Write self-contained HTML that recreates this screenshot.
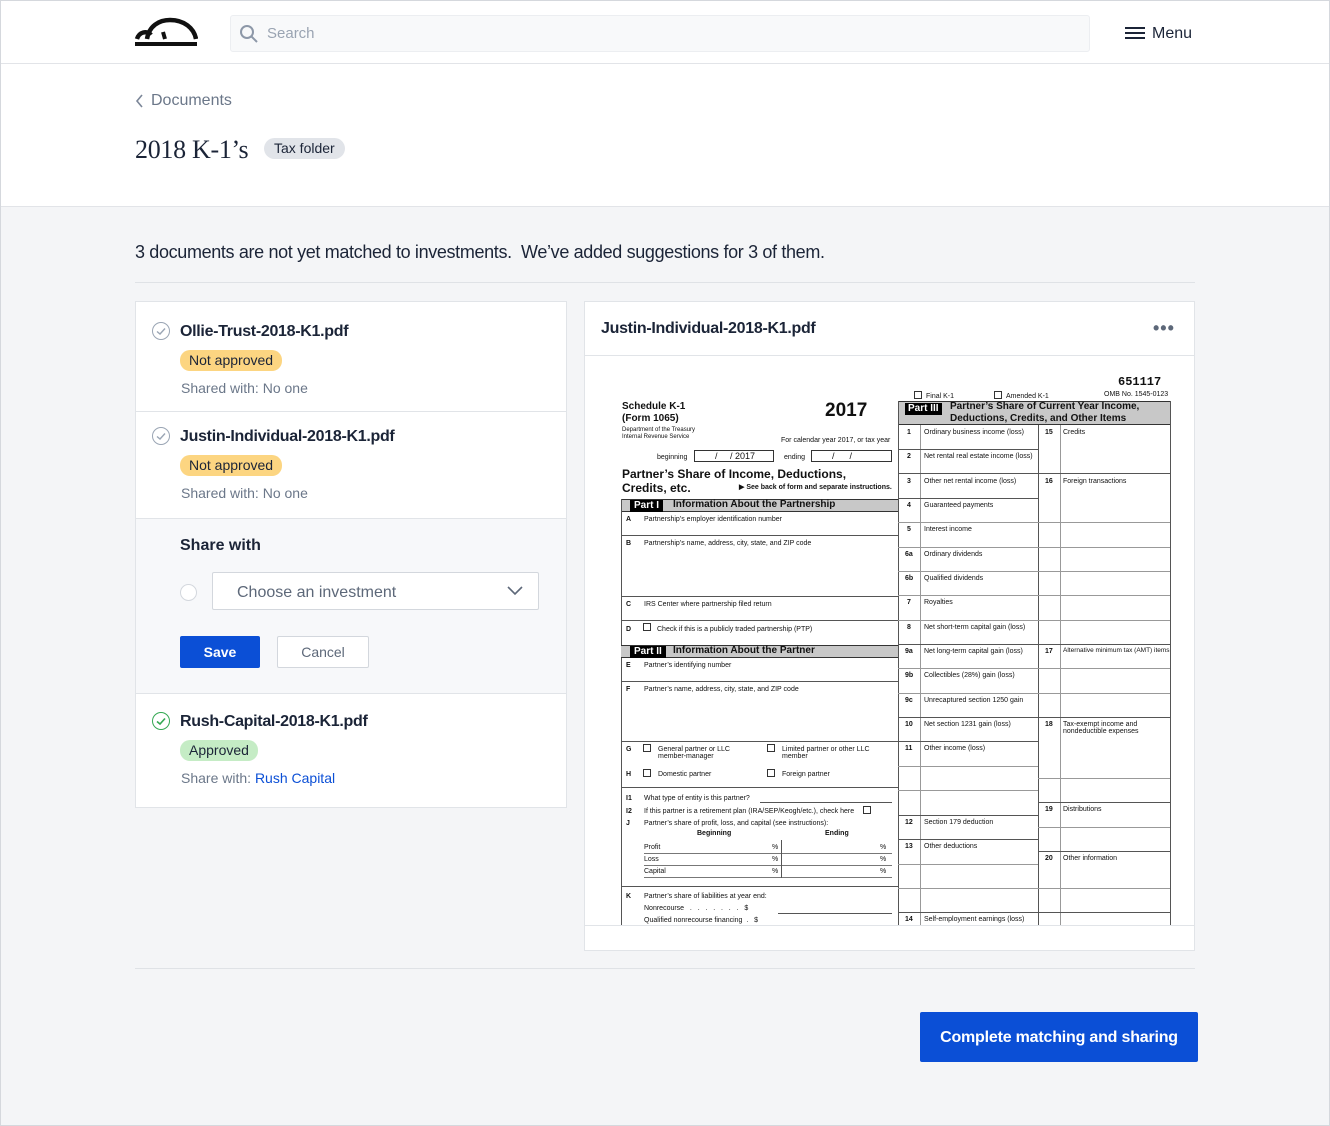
<!DOCTYPE html>
<html><head><meta charset="utf-8"><style>
*{box-sizing:border-box;margin:0;padding:0}
body{width:1330px;height:1126px;position:relative;background:#f4f5f7;font-family:"Liberation Sans",sans-serif;color:#1b2437;overflow:hidden}
.a{position:absolute}
.frame{position:absolute;left:0;top:0;width:1330px;height:1126px;border:1px solid #d5d8dd;pointer-events:none}
.hdr{left:0;top:0;width:1330px;height:64px;background:#fff;border-bottom:1px solid #e2e4e8}
.top{left:0;top:64px;width:1330px;height:143px;background:#fff;border-bottom:1px solid #e2e4e8}
.card{background:#fff;border:1px solid #e1e4e8}
.pill{display:inline-block;border-radius:10px;font-size:14px;padding:0 9px;height:21px;line-height:21px}
.chk{width:18px;height:18px;border:1.5px solid #9aa5b4;border-radius:50%}
.fn{font-size:16px;font-weight:bold;letter-spacing:-0.3px}
.sub{font-size:14px;color:#6b7789}
.f{font-size:7px;color:#111;white-space:nowrap;line-height:1}
.b{font-weight:bold}
.hl{position:absolute;height:1px;background:#555}
.vl{position:absolute;width:1px;background:#555}
</style></head><body>
<div class="a hdr"></div>
<svg class="a" style="left:134px;top:17px" width="64" height="31" viewBox="0 0 64 31"><path d="M3 22 C5 15 13 13 17 18 M13 22 C15 9 25 3 36 3 C50 3 60 11 62 22" fill="none" stroke="#111" stroke-width="4.5"/><path d="M31 22 L29 15" stroke="#111" stroke-width="4"/><rect x="1" y="25" width="62" height="4" fill="#111"/></svg>
<div class="a" style="left:230px;top:15px;width:860px;height:37px;background:#f8f9fa;border:1px solid #eceef1;border-radius:3px"></div>
<svg class="a" style="left:239px;top:24px" width="20" height="20" viewBox="0 0 20 20"><circle cx="8" cy="8" r="6" fill="none" stroke="#8d98a8" stroke-width="2"/><path d="M12.5 12.5 L18 18" stroke="#8d98a8" stroke-width="2"/></svg>
<div class="a" style="left:267px;top:25px;font-size:15px;color:#9aa4b2">Search</div>
<svg class="a" style="left:1125px;top:26px" width="20" height="15"><rect y="1" width="20" height="2" fill="#1b2437"/><rect y="6" width="20" height="2" fill="#1b2437"/><rect y="11" width="20" height="2" fill="#1b2437"/></svg>
<div class="a" style="left:1152px;top:25px;font-size:16px">Menu</div>
<div class="a top"></div>
<svg class="a" style="left:134px;top:93px" width="10" height="16"><path d="M8 2 L3 8 L8 14" fill="none" stroke="#7b8698" stroke-width="1.6"/></svg>
<div class="a" style="left:151px;top:92px;font-size:16px;color:#6b7789">Documents</div>
<div class="a" style="left:135px;top:135px;font-size:26px;font-family:'Liberation Serif',serif;letter-spacing:-0.3px">2018 K-1’s</div>
<div class="a" style="left:264px;top:138px;height:21px;line-height:21px;padding:0 10px;background:#e1e4e9;border-radius:11px;font-size:14px">Tax folder</div>

<div class="a" style="left:135px;top:242px;font-size:18px;letter-spacing:-0.35px">3 documents are not yet matched to investments.&nbsp; We’ve added suggestions for 3 of them.</div>
<div class="a" style="left:135px;top:282px;width:1060px;height:1px;background:#dfe2e6"></div>

<div class="a card" style="left:135px;top:301px;width:432px;height:507px"></div>
<div class="a" style="left:136px;top:411px;width:430px;height:1px;background:#e1e4e8"></div>
<div class="a" style="left:136px;top:518px;width:430px;height:1px;background:#e1e4e8"></div>
<div class="a" style="left:136px;top:519px;width:430px;height:174px;background:#f7f8fa"></div>
<div class="a" style="left:136px;top:693px;width:430px;height:1px;background:#e1e4e8"></div>

<div class="a chk" style="left:152px;top:322px"></div><svg class="a" style="left:156px;top:327px" width="10" height="9"><path d="M1 4.5 L4 7 L9 1.5" fill="none" stroke="#9aa5b4" stroke-width="1.4"/></svg>
<div class="a fn" style="left:180px;top:323px">Ollie-Trust-2018-K1.pdf</div>
<div class="a pill" style="left:180px;top:350px;background:#fcd581">Not approved</div>
<div class="a sub" style="left:181px;top:380px">Shared with: No one</div>

<div class="a chk" style="left:152px;top:427px"></div><svg class="a" style="left:156px;top:432px" width="10" height="9"><path d="M1 4.5 L4 7 L9 1.5" fill="none" stroke="#9aa5b4" stroke-width="1.4"/></svg>
<div class="a fn" style="left:180px;top:428px">Justin-Individual-2018-K1.pdf</div>
<div class="a pill" style="left:180px;top:455px;background:#fcd581">Not approved</div>
<div class="a sub" style="left:181px;top:485px">Shared with: No one</div>

<div class="a" style="left:180px;top:537px;font-size:16px;font-weight:bold">Share with</div>
<div class="a" style="left:180px;top:584px;width:17px;height:17px;border:1px solid #d3d7dd;border-radius:50%;background:#fff"></div>
<div class="a" style="left:212px;top:572px;width:327px;height:38px;background:#fff;border:1px solid #d3d7dd;border-radius:2px"></div>
<div class="a" style="left:237px;top:584px;font-size:16px;color:#5d6879">Choose an investment</div>
<svg class="a" style="left:506px;top:585px" width="18" height="12"><path d="M2 2 L9 9 L16 2" fill="none" stroke="#5d6879" stroke-width="1.6"/></svg>
<div class="a" style="left:180px;top:636px;width:80px;height:32px;background:#0b4fd6;border-radius:2px;color:#fff;font-size:14px;font-weight:bold;text-align:center;line-height:32px">Save</div>
<div class="a" style="left:277px;top:636px;width:92px;height:32px;background:#fff;border:1px solid #d3d7dd;border-radius:2px;color:#5d6879;font-size:14px;text-align:center;line-height:30px">Cancel</div>

<div class="a chk" style="left:152px;top:712px;border-color:#34a853"></div><svg class="a" style="left:156px;top:717px" width="10" height="9"><path d="M1 4.5 L4 7 L9 1.5" fill="none" stroke="#34a853" stroke-width="1.6"/></svg>
<div class="a fn" style="left:180px;top:713px">Rush-Capital-2018-K1.pdf</div>
<div class="a pill" style="left:180px;top:740px;background:#c5ecc5">Approved</div>
<div class="a sub" style="left:181px;top:770px">Share with: <span style="color:#0b4fd6">Rush Capital</span></div>

<div class="a card" style="left:584px;top:301px;width:611px;height:650px"></div>
<div class="a fn" style="left:601px;top:320px">Justin-Individual-2018-K1.pdf</div>
<div class="a" style="left:1153px;top:318px;font-size:18px;font-weight:bold;color:#5d6879;letter-spacing:1px">•••</div>
<div class="a" style="left:585px;top:355px;width:609px;height:1px;background:#e1e4e8"></div>
<div class="a" style="left:585px;top:925px;width:609px;height:1px;background:#e1e4e8"></div>

<!-- form -->
<div class="a f b" style="left:622px;top:402px;font-size:10px">Schedule K-1</div>
<div class="a f b" style="left:622px;top:414px;font-size:10px">(Form 1065)</div>
<div class="a f" style="left:622px;top:427px;font-size:6px">Department of the Treasury</div>
<div class="a f" style="left:622px;top:434px;font-size:6px">Internal Revenue Service</div>
<div class="a f b" style="left:825px;top:401px;font-size:19px">2017</div>
<div class="a f" style="left:781px;top:437px">For calendar year 2017, or tax year</div>
<div class="a f" style="left:657px;top:454px">beginning</div>
<div class="a" style="left:694px;top:450px;width:80px;height:12px;border:1px solid #333"></div>
<div class="a f" style="left:715px;top:452px;font-size:9px">/ &nbsp; &nbsp; / 2017</div>
<div class="a f" style="left:784px;top:454px">ending</div>
<div class="a" style="left:811px;top:450px;width:81px;height:12px;border:1px solid #333"></div>
<div class="a f" style="left:832px;top:452px;font-size:9px">/ &nbsp; &nbsp; &nbsp;/</div>
<div class="a f b" style="left:622px;top:468px;font-size:12px">Partner’s Share of Income, Deductions,</div>
<div class="a f b" style="left:622px;top:482px;font-size:12px">Credits, etc.</div>
<div class="a f b" style="left:739px;top:484px">▶ See back of form and separate instructions.</div>
<div class="a" style="left:621px;top:499px;width:277px;height:13px;background:#c8c8c8;border-top:1px solid #333;border-bottom:1px solid #333"></div>
<div class="a f b" style="left:630px;top:500px;font-size:10px;background:#000;color:#fff;padding:1px 4px">Part I</div>
<div class="a f b" style="left:673px;top:500px;font-size:10px">Information About the Partnership</div>
<div class="vl" style="left:621px;top:499px;height:426px"></div>
<div class="a f b" style="left:626px;top:516px">A</div><div class="a f" style="left:644px;top:516px">Partnership’s employer identification number</div>
<div class="hl" style="left:621px;top:535px;width:277px"></div>
<div class="a f b" style="left:626px;top:540px">B</div><div class="a f" style="left:644px;top:540px">Partnership’s name, address, city, state, and ZIP code</div>
<div class="hl" style="left:621px;top:596px;width:277px"></div>
<div class="a f b" style="left:626px;top:601px">C</div><div class="a f" style="left:644px;top:601px">IRS Center where partnership filed return</div>
<div class="hl" style="left:621px;top:620px;width:277px"></div>
<div class="a f b" style="left:626px;top:626px">D</div><div class="a" style="left:643px;top:623px;width:8px;height:8px;border:1px solid #333"></div><div class="a f" style="left:657px;top:626px">Check if this is a publicly traded partnership (PTP)</div>
<div class="a" style="left:621px;top:645px;width:277px;height:13px;background:#c8c8c8;border-top:1px solid #333;border-bottom:1px solid #333"></div>
<div class="a f b" style="left:630px;top:646px;font-size:10px;background:#000;color:#fff;padding:1px 4px">Part II</div>
<div class="a f b" style="left:673px;top:646px;font-size:10px">Information About the Partner</div>
<div class="a f b" style="left:626px;top:662px">E</div><div class="a f" style="left:644px;top:662px">Partner’s identifying number</div>
<div class="hl" style="left:621px;top:681px;width:277px"></div>
<div class="a f b" style="left:626px;top:686px">F</div><div class="a f" style="left:644px;top:686px">Partner’s name, address, city, state, and ZIP code</div>
<div class="hl" style="left:621px;top:741px;width:277px"></div>
<div class="a f b" style="left:626px;top:746px">G</div><div class="a" style="left:643px;top:744px;width:8px;height:8px;border:1px solid #333"></div><div class="a f" style="left:658px;top:746px">General partner or LLC<br>member-manager</div>
<div class="a" style="left:767px;top:744px;width:8px;height:8px;border:1px solid #333"></div><div class="a f" style="left:782px;top:746px">Limited partner or other LLC<br>member</div>
<div class="a f b" style="left:626px;top:771px">H</div><div class="a" style="left:643px;top:769px;width:8px;height:8px;border:1px solid #333"></div><div class="a f" style="left:658px;top:771px">Domestic partner</div>
<div class="a" style="left:767px;top:769px;width:8px;height:8px;border:1px solid #333"></div><div class="a f" style="left:782px;top:771px">Foreign partner</div>
<div class="hl" style="left:621px;top:787px;width:277px"></div>
<div class="a f b" style="left:626px;top:795px">I1</div><div class="a f" style="left:644px;top:795px">What type of entity is this partner?</div><div class="hl" style="left:760px;top:802px;width:132px"></div>
<div class="a f b" style="left:626px;top:808px">I2</div><div class="a f" style="left:644px;top:808px">If this partner is a retirement plan (IRA/SEP/Keogh/etc.), check here</div><div class="a" style="left:863px;top:806px;width:8px;height:8px;border:1px solid #333"></div>
<div class="a f b" style="left:626px;top:820px">J</div><div class="a f" style="left:644px;top:820px">Partner’s share of profit, loss, and capital (see instructions):</div>
<div class="a f b" style="left:697px;top:830px">Beginning</div><div class="a f b" style="left:825px;top:830px">Ending</div>
<div class="a f" style="left:644px;top:844px;width:247px">Profit<span style="position:absolute;left:128px">%</span><span style="position:absolute;left:236px">%</span></div>
<div class="a f" style="left:644px;top:856px;width:247px">Loss<span style="position:absolute;left:128px">%</span><span style="position:absolute;left:236px">%</span></div>
<div class="a f" style="left:644px;top:868px;width:247px">Capital<span style="position:absolute;left:128px">%</span><span style="position:absolute;left:236px">%</span></div>
<div class="hl" style="left:644px;top:853px;width:248px;background:#777"></div><div class="hl" style="left:644px;top:865px;width:248px;background:#777"></div><div class="hl" style="left:644px;top:877px;width:248px;background:#777"></div>
<div class="vl" style="left:781px;top:840px;height:38px"></div>
<div class="hl" style="left:621px;top:886px;width:277px"></div>
<div class="a f b" style="left:626px;top:893px">K</div><div class="a f" style="left:644px;top:893px">Partner’s share of liabilities at year end:</div>
<div class="a f" style="left:644px;top:905px">Nonrecourse &nbsp; . &nbsp; . &nbsp; . &nbsp; . &nbsp; . &nbsp; . &nbsp; . &nbsp; $</div><div class="hl" style="left:778px;top:913px;width:114px"></div>
<div class="a f" style="left:644px;top:917px">Qualified nonrecourse financing &nbsp;. &nbsp; $</div>

<div class="a f b" style="left:1118px;top:376px;font-size:12px;font-family:'Liberation Mono',monospace">651117</div>
<div class="a f" style="left:1104px;top:391px">OMB No. 1545-0123</div>
<div class="a" style="left:914px;top:391px;width:8px;height:8px;border:1px solid #333"></div><div class="a f" style="left:926px;top:393px">Final K-1</div>
<div class="a" style="left:994px;top:391px;width:8px;height:8px;border:1px solid #333"></div><div class="a f" style="left:1006px;top:393px">Amended K-1</div>
<div class="a" style="left:898px;top:401px;width:273px;height:24px;background:#c8c8c8;border:1px solid #333"></div>
<div class="a f b" style="left:905px;top:403px;font-size:10px;background:#000;color:#fff;padding:1px 3px">Part III</div>
<div class="a f b" style="left:950px;top:402px;font-size:10px">Partner’s Share of Current Year Income,</div>
<div class="a f b" style="left:950px;top:414px;font-size:10px">Deductions, Credits, and Other Items</div>
<div class="vl" style="left:898px;top:401px;height:524px"></div>
<div class="vl" style="left:1170px;top:401px;height:524px"></div>
<div class="vl" style="left:1038px;top:425px;height:500px"></div>
<div class="vl" style="left:920px;top:425px;height:500px;background:#999"></div>
<div class="vl" style="left:1060px;top:425px;height:500px;background:#999"></div>

<div class="hl" style="left:898px;top:449px;width:140px"></div><div class="hl" style="left:898px;top:473px;width:272px"></div>
<div class="hl" style="left:898px;top:498px;width:140px"></div><div class="hl" style="left:898px;top:522px;width:272px;background:#999"></div>
<div class="hl" style="left:898px;top:547px;width:272px;background:#999"></div><div class="hl" style="left:898px;top:571px;width:272px;background:#999"></div>
<div class="hl" style="left:898px;top:595px;width:272px;background:#999"></div><div class="hl" style="left:898px;top:620px;width:272px;background:#999"></div>
<div class="hl" style="left:898px;top:644px;width:272px"></div><div class="hl" style="left:898px;top:668px;width:272px;background:#999"></div>
<div class="hl" style="left:898px;top:693px;width:272px;background:#999"></div><div class="hl" style="left:898px;top:717px;width:272px"></div>
<div class="hl" style="left:898px;top:741px;width:140px"></div><div class="hl" style="left:1038px;top:778px;width:132px;background:#999"></div>
<div class="hl" style="left:898px;top:766px;width:140px;background:#999"></div><div class="hl" style="left:898px;top:790px;width:140px;background:#999"></div>
<div class="hl" style="left:1038px;top:802px;width:132px"></div><div class="hl" style="left:898px;top:815px;width:140px"></div>
<div class="hl" style="left:1038px;top:827px;width:132px;background:#999"></div><div class="hl" style="left:898px;top:839px;width:140px"></div>
<div class="hl" style="left:1038px;top:851px;width:132px"></div><div class="hl" style="left:898px;top:864px;width:140px;background:#999"></div>
<div class="hl" style="left:898px;top:888px;width:140px;background:#999"></div><div class="hl" style="left:1038px;top:888px;width:132px;background:#999"></div>
<div class="hl" style="left:898px;top:912px;width:272px"></div>

<div class="a f b" style="left:907px;top:429px">1</div><div class="a f" style="left:924px;top:429px">Ordinary business income (loss)</div>
<div class="a f b" style="left:907px;top:453px">2</div><div class="a f" style="left:924px;top:453px">Net rental real estate income (loss)</div>
<div class="a f b" style="left:907px;top:478px">3</div><div class="a f" style="left:924px;top:478px">Other net rental income (loss)</div>
<div class="a f b" style="left:907px;top:502px">4</div><div class="a f" style="left:924px;top:502px">Guaranteed payments</div>
<div class="a f b" style="left:907px;top:526px">5</div><div class="a f" style="left:924px;top:526px">Interest income</div>
<div class="a f b" style="left:905px;top:551px">6a</div><div class="a f" style="left:924px;top:551px">Ordinary dividends</div>
<div class="a f b" style="left:905px;top:575px">6b</div><div class="a f" style="left:924px;top:575px">Qualified dividends</div>
<div class="a f b" style="left:907px;top:599px">7</div><div class="a f" style="left:924px;top:599px">Royalties</div>
<div class="a f b" style="left:907px;top:624px">8</div><div class="a f" style="left:924px;top:624px">Net short-term capital gain (loss)</div>
<div class="a f b" style="left:905px;top:648px">9a</div><div class="a f" style="left:924px;top:648px">Net long-term capital gain (loss)</div>
<div class="a f b" style="left:905px;top:672px">9b</div><div class="a f" style="left:924px;top:672px">Collectibles (28%) gain (loss)</div>
<div class="a f b" style="left:905px;top:697px">9c</div><div class="a f" style="left:924px;top:697px">Unrecaptured section 1250 gain</div>
<div class="a f b" style="left:905px;top:721px">10</div><div class="a f" style="left:924px;top:721px">Net section 1231 gain (loss)</div>
<div class="a f b" style="left:905px;top:745px">11</div><div class="a f" style="left:924px;top:745px">Other income (loss)</div>
<div class="a f b" style="left:905px;top:819px">12</div><div class="a f" style="left:924px;top:819px">Section 179 deduction</div>
<div class="a f b" style="left:905px;top:843px">13</div><div class="a f" style="left:924px;top:843px">Other deductions</div>
<div class="a f b" style="left:905px;top:916px">14</div><div class="a f" style="left:924px;top:916px">Self-employment earnings (loss)</div>
<div class="a f b" style="left:1045px;top:429px">15</div><div class="a f" style="left:1063px;top:429px">Credits</div>
<div class="a f b" style="left:1045px;top:478px">16</div><div class="a f" style="left:1063px;top:478px">Foreign transactions</div>
<div class="a f b" style="left:1045px;top:648px">17</div><div class="a f" style="left:1063px;top:648px;font-size:6.5px">Alternative minimum tax (AMT) items</div>
<div class="a f b" style="left:1045px;top:721px">18</div><div class="a f" style="left:1063px;top:721px">Tax-exempt income and<br>nondeductible expenses</div>
<div class="a f b" style="left:1045px;top:806px">19</div><div class="a f" style="left:1063px;top:806px">Distributions</div>
<div class="a f b" style="left:1045px;top:855px">20</div><div class="a f" style="left:1063px;top:855px">Other information</div>

<div class="a" style="left:135px;top:968px;width:1060px;height:1px;background:#dfe2e6"></div>
<div class="a" style="left:920px;top:1012px;width:278px;height:50px;background:#0b4fd6;border-radius:2px;color:#fff;font-size:16px;font-weight:bold;text-align:center;line-height:52px;letter-spacing:-0.2px">Complete matching and sharing</div>
<div class="frame"></div>
</body></html>
